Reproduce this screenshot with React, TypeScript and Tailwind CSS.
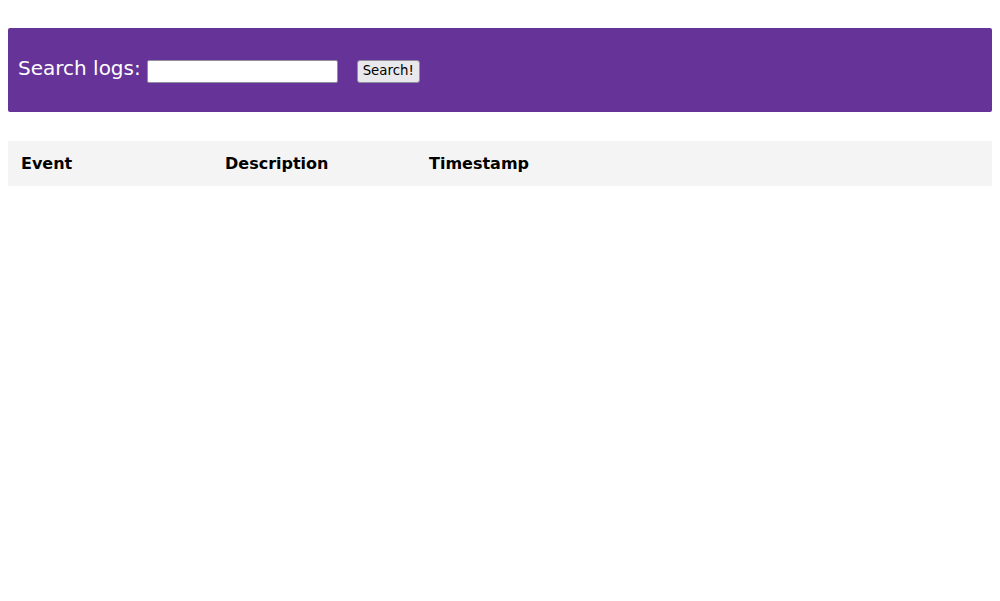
export default function App() {
  return (
    <div className="min-h-[601px] bg-white px-2 pt-[28px] font-['DejaVu_Sans',sans-serif]">
      <header className="flex h-[84px] items-center rounded-[2px] bg-[#663399] pl-[10px]">
        <label className="pb-[5px] text-[20px] leading-none text-white">Search logs:</label>
        <input
          type="text"
          className="ml-[6px] mt-[2px] h-[23px] w-[191px] rounded-[2px] border border-[#8f8f9d] bg-white"
        />
        <button className="ml-[19px] mt-[2px] h-[23px] w-[63px] rounded-[3px] border border-[#8f8f9d] bg-[#e9e9ed] text-[13.33px] leading-none text-black">
          Search!
        </button>
      </header>

      <div className="mt-[29px] grid h-[45px] grid-cols-[204px_204px_204px_1fr] items-center rounded-[2px] bg-[#f4f4f4] text-[16px] font-bold text-black">
        <div className="pl-[13px]">Event</div>
        <div className="pl-[13px]">Description</div>
        <div className="pl-[13px]">Timestamp</div>
        <div />
      </div>
    </div>
  );
}
